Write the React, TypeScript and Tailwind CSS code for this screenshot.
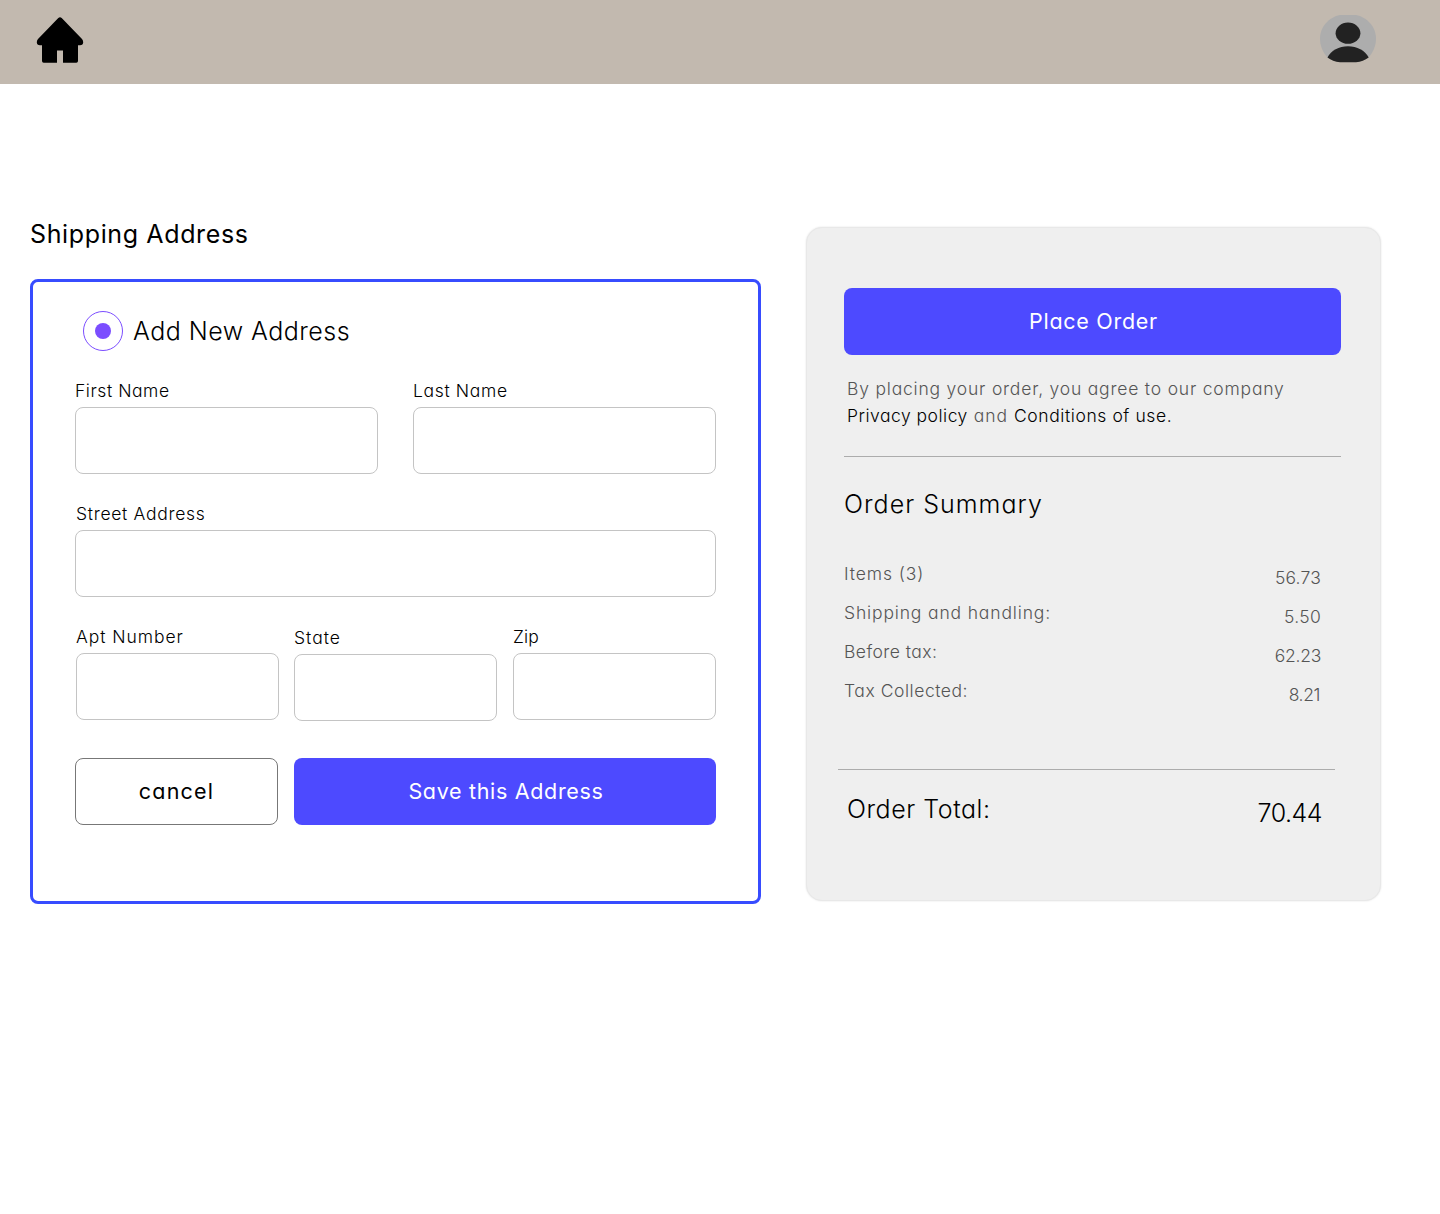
import type { ReactNode } from "react";

function HomeIcon() {
  return (
    <svg width="48" height="48" viewBox="36 16 48 48" aria-hidden="true">
      <path
        d="M58.3 17.9Q60 16.4 61.7 17.9L82 38.9Q83.2 40.4 83.2 42.3Q83.2 45.3 80 45.3H78V61Q78 62.7 76.3 62.7H63V50.5H57V62.7H43.7Q42 62.7 42 61V45.3H40Q36.8 45.3 36.8 42.3Q36.8 40.4 38 38.9Z"
        fill="#000"
      />
    </svg>
  );
}

function AvatarIcon() {
  return (
    <svg width="56" height="48" viewBox="1320 15 56 48" aria-hidden="true">
      <path
        d="M1340 15H1356C1367 17 1376 27 1376 38.5C1376 46 1373 52.5 1368.5 57.5L1358 62H1338L1327.5 57.5C1323 52.5 1320 46 1320 38.5C1320 27 1329 17 1340 15Z"
        fill="#adadad"
      />
      <ellipse cx="1348" cy="33.2" rx="12.4" ry="10.6" fill="#222" />
      <path
        d="M1327.5 57.5C1331 50.5 1339 46.3 1348 46.3S1365 50.5 1368.7 57.5C1365 60.2 1361 62.2 1356 62.2H1340C1335 62.2 1331 60.2 1327.5 57.5Z"
        fill="#222"
      />
    </svg>
  );
}

function Field({ label, id, spacing, className = "" }: { label: string; id: string; spacing: string; className?: string }) {
  return (
    <div className={`flex flex-col ${className}`}>
      <label htmlFor={id} className={`h-8 text-[17.5px] leading-8 font-light ${spacing}`}>
        {label}
      </label>
      <input id={id} className="h-[67px] w-full rounded-lg border border-[#c4c4c4] bg-white px-4 outline-none" />
    </div>
  );
}

function SummaryRow({ label, value, spacing, valueSpacing }: { label: string; value: string; spacing: string; valueSpacing: string }) {
  return (
    <div className="flex h-[39px] justify-between pr-5 leading-[39px]">
      <span className={spacing}>{label}</span>
      <span className={`pt-1 ${valueSpacing}`}>{value}</span>
    </div>
  );
}

function PrimaryButton({ children, className }: { children: ReactNode; className: string }) {
  return (
    <button className={`h-[67px] rounded-lg bg-[#4d4aff] pl-0.5 text-[21.5px] font-[380] text-white ${className}`}>
      {children}
    </button>
  );
}

export default function App() {
  return (
    <div className="min-h-[1214px] w-[1440px] bg-white font-['Inter',sans-serif] text-black [font-feature-settings:'cv11']">
      <header className="flex h-[84px] items-start justify-between bg-[#c2b9af] pt-[15px] pr-16 pl-9">
        <a href="#" aria-label="Home" className="pt-px">
          <HomeIcon />
        </a>
        <button aria-label="Account">
          <AvatarIcon />
        </button>
      </header>

      <main className="flex items-start gap-[45px] pt-[130px] pl-[30px]">
        <section className="w-[731px]">
          <h1 className="h-[65px] text-[25px] leading-[41px] font-[380] tracking-[0.63px]">Shipping Address</h1>
          <form className="h-[625px] rounded-lg border-3 border-[#374cff] pt-[29px] pr-[42px] pl-[42px]">
            <div className="flex h-10 items-center gap-2.5 pl-2">
              <span className="flex size-10 items-center justify-center rounded-full border border-[#7b4dff]">
                <span className="size-4 rounded-full bg-[#7b4dff]" />
              </span>
              <span className="text-[25px] leading-10 font-light tracking-[0.47px]">Add New Address</span>
            </div>
            <div className="mt-6 flex gap-[35px]">
              <Field id="first" label="First Name" spacing="tracking-[0.55px]" className="w-[303px]" />
              <Field id="last" label="Last Name" spacing="tracking-[0.65px]" className="w-[303px]" />
            </div>
            <Field id="street" label="Street Address" spacing="tracking-[0.7px] pl-px" className="mt-6" />
            <div className="mt-6 flex justify-end gap-[15px]">
              <Field id="apt" label="Apt Number" spacing="tracking-[0.95px]" className="w-[203px]" />
              <Field id="state" label="State" spacing="tracking-[1px]" className="mt-px w-[203px]" />
              <Field id="zip" label="Zip" spacing="tracking-[0.2px]" className="ml-px w-[203px]" />
            </div>
            <div className="mt-[37px] flex gap-4">
              <button
                type="button"
                className="h-[67px] w-[203px] rounded-lg border border-[#777] bg-white text-[21.5px] font-[380] tracking-[1.2px]"
              >
                cancel
              </button>
              <PrimaryButton className="w-[422px] tracking-[0.68px]">Save this Address</PrimaryButton>
            </div>
          </form>
        </section>

        <aside className="mt-[13px] h-[674px] w-[575px] rounded-2xl border border-[#e8e8e8] bg-[#efefef] pt-[60px] pl-[37px] shadow-[0_0_2px_rgba(0,0,0,0.12)]">
          <div className="w-[497px]">
            <PrimaryButton className="w-full tracking-[0.72px]">Place Order</PrimaryButton>
            <p className="mt-5 pl-[3px] text-[17.5px] leading-[27px] font-light whitespace-nowrap text-[#555]">
              <span className="tracking-[0.8px]">By placing your order, you agree to our company</span>
              <br />
              <a href="#" className="font-[350] tracking-[0.5px] text-black">Privacy policy</a>
              <span className="tracking-[1px]"> and </span>
              <a href="#" className="font-[350] tracking-[0.58px] text-black">Conditions of use.</a>
            </p>
            <hr className="mt-[27px] border-[#acacac]" />
            <h2 className="mt-[27px] h-10 text-[25px] leading-10 font-light tracking-[1.02px]">Order Summary</h2>
            <div className="mt-[30px] text-[17.5px] font-light text-[#555]">
              <SummaryRow label="Items (3)" value="56.73" spacing="tracking-[0.9px]" valueSpacing="tracking-[0.2px]" />
              <SummaryRow label="Shipping and handling:" value="5.50" spacing="tracking-[0.85px]" valueSpacing="tracking-[0.3px]" />
              <SummaryRow label="Before tax:" value="62.23" spacing="tracking-[0.45px]" valueSpacing="tracking-[-0.25px]" />
              <SummaryRow label="Tax Collected:" value="8.21" spacing="tracking-[0.55px]" valueSpacing="tracking-[-0.4px] pr-px" />
            </div>
            <hr className="mt-[59px] mr-1.5 -ml-1.5 border-[#acacac]" />
            <div className="flex justify-between pt-[19px] pr-[19px] pl-[3px] text-[25px] leading-10 font-light">
              <span className="tracking-[0.54px]">Order Total:</span>
              <span className="pt-1 tracking-[-0.5px]">70.44</span>
            </div>
          </div>
        </aside>
      </main>
    </div>
  );
}
